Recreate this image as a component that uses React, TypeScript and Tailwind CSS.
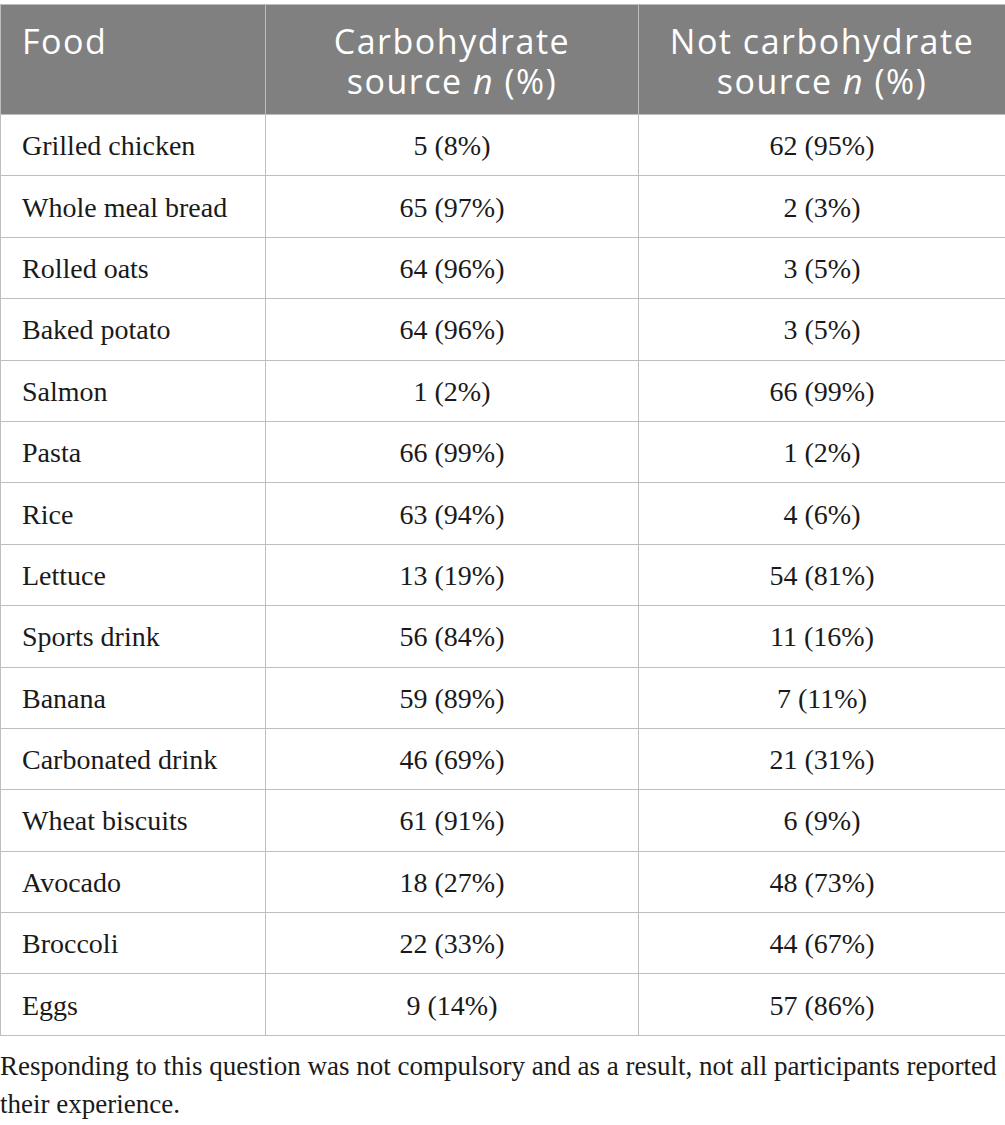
const rows: [string, string, string][] = [
  ["Grilled chicken", "5 (8%)", "62 (95%)"],
  ["Whole meal bread", "65 (97%)", "2 (3%)"],
  ["Rolled oats", "64 (96%)", "3 (5%)"],
  ["Baked potato", "64 (96%)", "3 (5%)"],
  ["Salmon", "1 (2%)", "66 (99%)"],
  ["Pasta", "66 (99%)", "1 (2%)"],
  ["Rice", "63 (94%)", "4 (6%)"],
  ["Lettuce", "13 (19%)", "54 (81%)"],
  ["Sports drink", "56 (84%)", "11 (16%)"],
  ["Banana", "59 (89%)", "7 (11%)"],
  ["Carbonated drink", "46 (69%)", "21 (31%)"],
  ["Wheat biscuits", "61 (91%)", "6 (9%)"],
  ["Avocado", "18 (27%)", "48 (73%)"],
  ["Broccoli", "22 (33%)", "44 (67%)"],
  ["Eggs", "9 (14%)", "57 (86%)"],
];

export default function App() {
  return (
    <div className="w-[1005px] bg-white pt-1 font-['Liberation_Serif',serif] text-[#1a1a1a]">
      <table className="w-[1005px] table-fixed border-collapse">
        <colgroup>
          <col className="w-[265px]" />
          <col className="w-[373px]" />
          <col className="w-[367px]" />
        </colgroup>
        <thead>
          <tr className="h-[110px] bg-[#7f807f] font-['Open_Sans',sans-serif] text-[34px] leading-[40px] tracking-[0.045em] text-white">
            <th className="border border-[#bdbdbd] px-[21px] pt-[16px] text-left align-top font-normal">
              Food
            </th>
            <th className="border border-[#bdbdbd] px-2 pt-[2px] text-center align-middle font-normal">
              Carbohydrate
              <br />
              source <i>n</i> (%)
            </th>
            <th className="border border-[#bdbdbd] px-2 pt-[2px] text-center align-middle font-normal">
              Not carbohydrate
              <br />
              source <i>n</i> (%)
            </th>
          </tr>
        </thead>
        <tbody className="text-[28px]">
          {rows.map((r, i) => (
            <tr key={i} className="h-[61.4px]">
              <td className="border border-[#bdbdbd] px-[21px] pt-[2px] text-left">{r[0]}</td>
              <td className="border border-[#bdbdbd] pt-[2px] text-center">{r[1]}</td>
              <td className="border border-[#bdbdbd] pt-[2px] text-center">{r[2]}</td>
            </tr>
          ))}
        </tbody>
      </table>
      <p className="pt-[11px] text-[27px] leading-[38px]">
        Responding to this question was not compulsory and as a result, not all participants reported
        their experience.
      </p>
    </div>
  );
}
